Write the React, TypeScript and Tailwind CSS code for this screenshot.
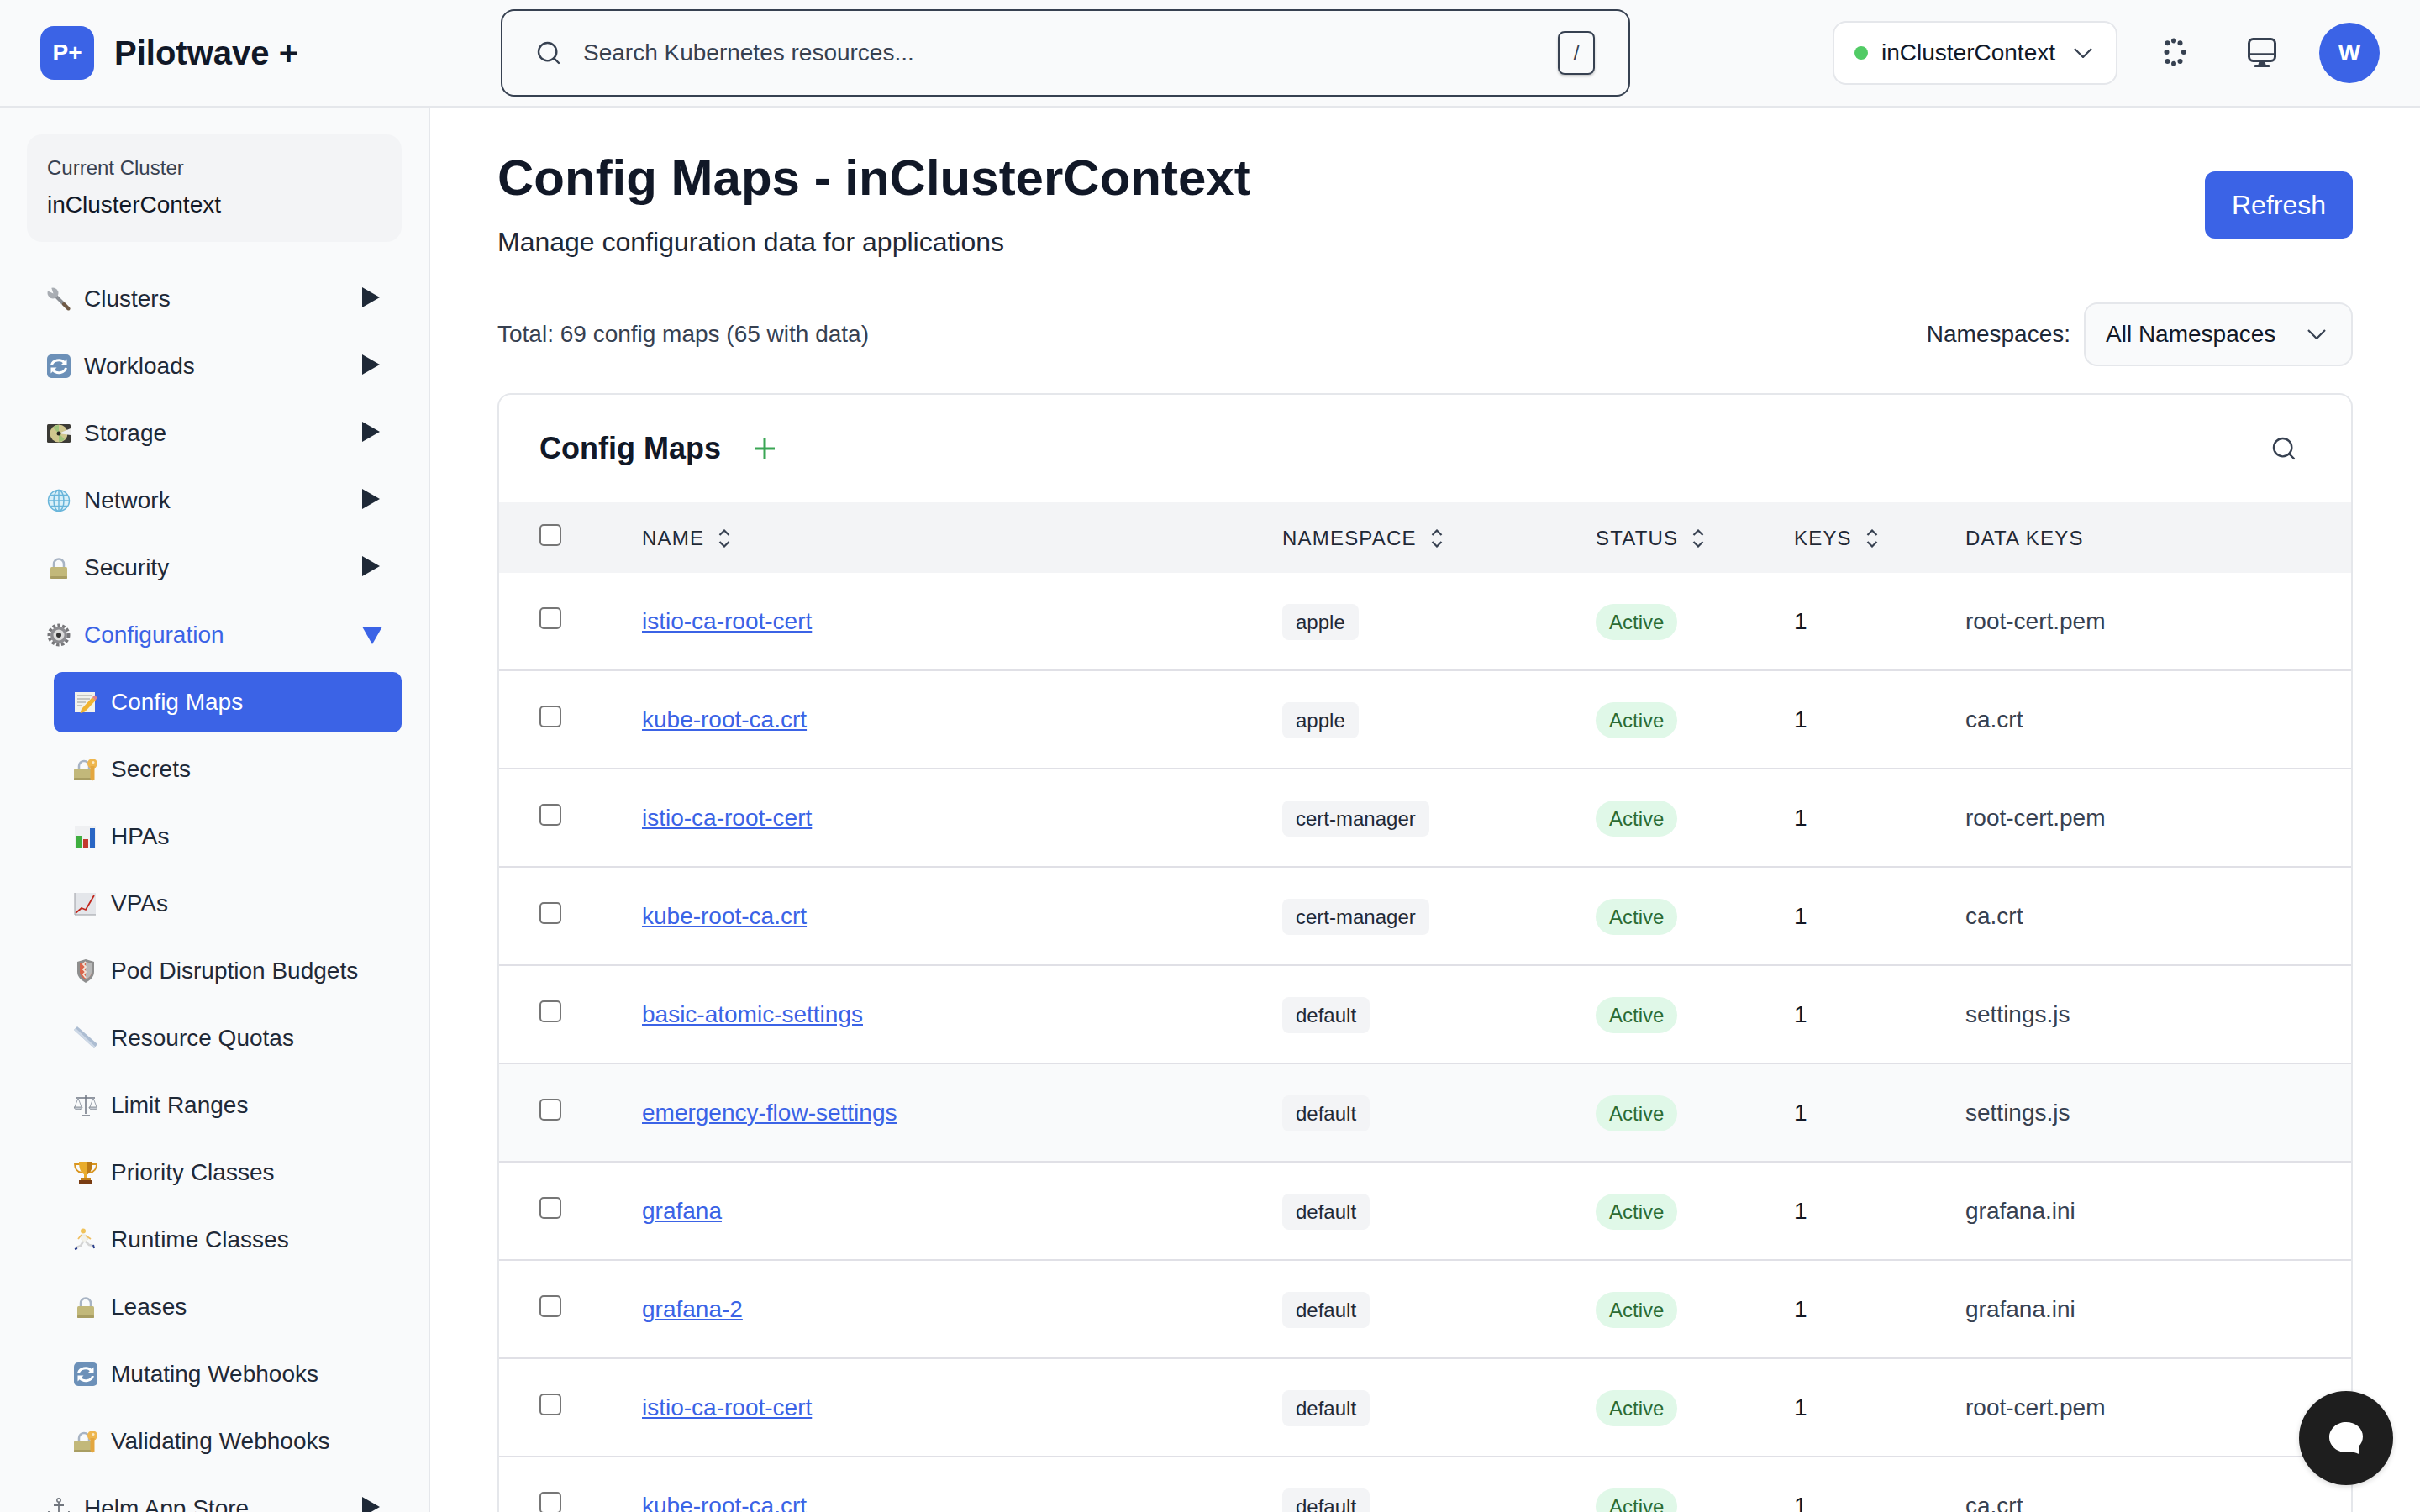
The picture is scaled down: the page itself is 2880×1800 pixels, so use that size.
import type { ReactNode } from 'react';
import { Search } from 'lucide-react';

const BLUE = '#3b63e6';

function Svg({ children, className = 'h-[28px] w-[28px] shrink-0' }: { children: ReactNode; className?: string }) {
  return (
    <svg viewBox="0 0 28 28" className={className} aria-hidden="true">
      {children}
    </svg>
  );
}

const WrenchIcon = () => (
  <Svg>
    <path d="M9 9 25 25" stroke="#8b8f95" strokeWidth="4" strokeLinecap="round" />
    <path d="M20 20 25.500 25.500" stroke="#6f5a46" strokeWidth="4" strokeLinecap="round" />
    <circle cx="7" cy="7" r="6.500" fill="#a9adb3" />
    <path d="M7.500 7.500 0 4V0h5z" fill="#f9fafb" />
  </Svg>
);

const RefreshIcon = () => (
  <Svg>
    <rect x="0" y="0" width="28" height="28" rx="5" fill="#6c90b8" />
    <path d="M5.500 12.500a8.500 7 0 0 1 15-3" fill="none" stroke="#fff" strokeWidth="3" />
    <path d="M23.500 5.500v7h-7z" fill="#fff" />
    <path d="M22.500 16a8.500 7 0 0 1-15 3" fill="none" stroke="#fff" strokeWidth="3" />
    <path d="M4.500 22.500v-7h7z" fill="#fff" />
  </Svg>
);

const DiskIcon = () => (
  <Svg>
    <rect x="0" y="3" width="28" height="22" rx="1.500" fill="#3b3a35" />
    <circle cx="14" cy="14" r="10.500" fill="#cfc68e" />
    <path d="M14 14 7 7a10 10 0 0 1 7-3zM14 14l7 7a10 10 0 0 1-7 3z" fill="#9fc27a" />
    <path d="M14 14 28 8v8z" fill="#ececec" />
    <circle cx="14" cy="14" r="2.500" fill="#26251f" />
  </Svg>
);

const GlobeIcon = () => (
  <Svg>
    <circle cx="14" cy="14" r="12.500" fill="#d9f0f9" stroke="#69b5da" strokeWidth="1.500" />
    <ellipse cx="14" cy="14" rx="6" ry="12.500" fill="none" stroke="#69b5da" strokeWidth="1.500" />
    <path d="M14 1.500v25M1.500 14h25M3.500 7.500h21M3.500 20.500h21" stroke="#69b5da" strokeWidth="1.500" />
  </Svg>
);

const LockIcon = () => (
  <Svg>
    <path d="M8 14V9.500a6 6 0 0 1 12 0V14" fill="none" stroke="#a8b4c4" strokeWidth="2.500" />
    <rect x="4" y="13" width="20" height="14" rx="1.500" fill="#c2b87a" />
    <rect x="4" y="24" width="20" height="3" rx="1" fill="#a89d62" />
  </Svg>
);

const GearIcon = () => (
  <Svg>
    <circle cx="14" cy="14" r="11.500" fill="none" stroke="#77777a" strokeWidth="4" strokeDasharray="3.500 2.300" />
    <circle cx="14" cy="14" r="10" fill="#8c8c90" />
    <circle cx="14" cy="14" r="6.500" fill="#dcdcdc" />
    <circle cx="14" cy="14" r="3" fill="#333" />
  </Svg>
);

const MemoIcon = () => (
  <Svg>
    <rect x="1" y="2" width="24" height="24" fill="#f1f1ec" />
    <path d="M4 6h17M4 10h15M4 14h10M4 18h6" stroke="#9b9b95" strokeWidth="1" />
    <path d="M9 22 22 8l4 3.500-13 14-5.500 1.500z" fill="#f0b433" />
    <path d="M22 8l1.500-1.500a2 2 0 0 1 3 .5l.5 1a2 2 0 0 1-.5 2.500L25.500 12z" fill="#e0848a" />
  </Svg>
);

const LockKeyIcon = () => (
  <Svg>
    <path d="M6 14V10a6 6 0 0 1 12 0v4" fill="none" stroke="#a8b4c4" strokeWidth="2.500" />
    <rect x="0" y="13" width="21" height="14" rx="1.500" fill="#c2b87a" />
    <rect x="0" y="24" width="21" height="3" rx="1" fill="#a89d62" />
    <circle cx="22" cy="7" r="6" fill="#eeb64e" />
    <circle cx="23" cy="5.500" r="1.500" fill="#fbeac5" />
    <path d="M19.500 10h5v16l-2.500 1.500-2.500-2.500z" fill="#e3a63f" />
  </Svg>
);

const BarsIcon = () => (
  <Svg>
    <rect x="1" y="1" width="25" height="26" fill="#eff0f2" />
    <rect x="3" y="13" width="6" height="14" fill="#3fae3f" />
    <rect x="11" y="17" width="6" height="10" fill="#c23a2e" />
    <rect x="19" y="4" width="6" height="23" fill="#2a66c4" />
  </Svg>
);

const ChartIcon = () => (
  <Svg>
    <rect x="1" y="1" width="25" height="26" fill="#e4e6ea" />
    <path d="M2 25 9 19l5 2 10-17" fill="none" stroke="#c2281e" strokeWidth="1.800" />
    <path d="M1 1v26h25" fill="none" stroke="#9a9ca2" strokeWidth="1" />
  </Svg>
);

const ShieldIcon = () => (
  <Svg>
    <path d="M14 0 24 3v12c0 6-5 10-10 13C9 25 4 21 4 15V3z" fill="#8e8e8e" />
    <path d="M14 3 21 5v10c0 4-3 7-7 9-4-2-7-5-7-9V5z" fill="#d9654c" />
    <path d="M14 3v21c4-2 7-5 7-9V5z" fill="#b9b9b9" />
    <path d="M14 3l-3 3 3 3-3 3 3 3-3 3 3 4" fill="none" stroke="#f3e4d8" strokeWidth="1.800" />
  </Svg>
);

const RulerIcon = () => (
  <Svg>
    <path d="M0 4 4 0 28 21 24 26z" fill="#adbdd2" />
    <path d="M0 4 24 26l1.500-2L2 2z" fill="#cdd8e6" />
  </Svg>
);

const ScaleIcon = () => (
  <Svg>
    <path d="M14 2v22M9 26h10M3 5h22" stroke="#6f7682" strokeWidth="1.500" fill="none" />
    <path d="M5 5 1 16M5 5l4 11M23 5l-4 11M23 5l4 11" stroke="#9aa1ac" strokeWidth="1" fill="none" />
    <path d="M0 16h10a5 3 0 0 1-10 0zM18 16h10a5 3 0 0 1-10 0z" fill="#c5cad2" stroke="#767d88" strokeWidth=".8" />
  </Svg>
);

const TrophyIcon = () => (
  <Svg>
    <path d="M7 4H1c0 6 3 9 8 10M21 4h6c0 6-3 9-8 10" fill="none" stroke="#d9951f" strokeWidth="1.800" />
    <path d="M6 1h16c0 8-2 13-6 15v4h-4v-4C8 14 6 9 6 1z" fill="#e9ac2c" />
    <path d="M16 1h6c0 8-2 13-6 15z" fill="#bc7a16" />
    <rect x="8" y="20" width="12" height="3" fill="#c4821c" />
    <rect x="6" y="23" width="16" height="4" fill="#7a3c12" />
  </Svg>
);

const RunnerIcon = () => (
  <Svg>
    <circle cx="11" cy="3.500" r="3" fill="#f0c25a" />
    <path d="M9 8 14 8 17 13 13 17 9 14z" fill="#f2f1ea" stroke="#d8d6c8" strokeWidth=".5" />
    <path d="M14 9 20 13M9 8 5 13" stroke="#efbf62" strokeWidth="1.800" fill="none" />
    <path d="M11 16 8 21 3 23M14 16 18 20 24 21" stroke="#d4d4d4" strokeWidth="2.500" fill="none" />
    <path d="M1 25 4 24M23 20 24 24" stroke="#2b3f8c" strokeWidth="2" fill="none" />
  </Svg>
);

const AnchorIcon = () => (
  <Svg>
    <circle cx="14" cy="4" r="2.200" fill="none" stroke="#70757d" strokeWidth="1.500" />
    <path d="M14 6v20M8 10h12M2 17c0 6 6 9 12 9s12-3 12-9" fill="none" stroke="#70757d" strokeWidth="1.800" />
  </Svg>
);

function Triangle({ open }: { open?: boolean }) {
  if (open) {
    return (
      <svg viewBox="0 0 24 21" className="-mr-[1px] h-[21px] w-[24px] shrink-0" aria-hidden="true">
        <path d="M0 0h24L12 21z" fill={BLUE} />
      </svg>
    );
  }
  return (
    <svg viewBox="0 0 21 24" className="mr-[2px] h-[24px] w-[21px] shrink-0 -translate-y-[2px]" aria-hidden="true">
      <path d="M0 0 21 12 0 24z" fill="#1f2937" />
    </svg>
  );
}

function Chevron({ className }: { className: string }) {
  return (
    <svg viewBox="0 0 22 12" className={className} fill="none" stroke="#374151" strokeWidth="2.200" aria-hidden="true">
      <path d="M1 1l10 10L21 1" />
    </svg>
  );
}

function SortIcon() {
  return (
    <svg viewBox="0 0 16 22" className="h-[22px] w-[16px] shrink-0" fill="none" stroke="#374151" strokeWidth="2.200" aria-hidden="true">
      <path d="M2.500 7 8 1.500 13.500 7M2.500 15 8 20.500 13.500 15" />
    </svg>
  );
}

const NAV_TOP = [
  { label: 'Clusters', icon: <WrenchIcon /> },
  { label: 'Workloads', icon: <RefreshIcon /> },
  { label: 'Storage', icon: <DiskIcon /> },
  { label: 'Network', icon: <GlobeIcon /> },
  { label: 'Security', icon: <LockIcon /> },
];

const NAV_CONFIG = [
  { label: 'Config Maps', icon: <MemoIcon /> },
  { label: 'Secrets', icon: <LockKeyIcon /> },
  { label: 'HPAs', icon: <BarsIcon /> },
  { label: 'VPAs', icon: <ChartIcon /> },
  { label: 'Pod Disruption Budgets', icon: <ShieldIcon /> },
  { label: 'Resource Quotas', icon: <RulerIcon /> },
  { label: 'Limit Ranges', icon: <ScaleIcon /> },
  { label: 'Priority Classes', icon: <TrophyIcon /> },
  { label: 'Runtime Classes', icon: <RunnerIcon /> },
  { label: 'Leases', icon: <LockIcon /> },
  { label: 'Mutating Webhooks', icon: <RefreshIcon /> },
  { label: 'Validating Webhooks', icon: <LockKeyIcon /> },
];

const ROWS = [
  { name: 'istio-ca-root-cert', ns: 'apple', data: 'root-cert.pem' },
  { name: 'kube-root-ca.crt', ns: 'apple', data: 'ca.crt' },
  { name: 'istio-ca-root-cert', ns: 'cert-manager', data: 'root-cert.pem' },
  { name: 'kube-root-ca.crt', ns: 'cert-manager', data: 'ca.crt' },
  { name: 'basic-atomic-settings', ns: 'default', data: 'settings.js' },
  { name: 'emergency-flow-settings', ns: 'default', data: 'settings.js', hovered: true },
  { name: 'grafana', ns: 'default', data: 'grafana.ini' },
  { name: 'grafana-2', ns: 'default', data: 'grafana.ini' },
  { name: 'istio-ca-root-cert', ns: 'default', data: 'root-cert.pem' },
  { name: 'kube-root-ca.crt', ns: 'default', data: 'ca.crt' },
];

// spinner dots, read off the reference: it is taller than it is wide
const SPINNER_DOTS = [
  [0, -13.5],
  [7.5, -10.7],
  [11.8, 0],
  [7.5, 11],
  [0, 13.7],
  [-7.5, 11],
  [-8.5, 0],
  [-7.5, -10.7],
];

const GRID = 'grid grid-cols-[122px_762px_373px_236px_204px_1fr] items-center pl-[48px]';

function Checkbox() {
  return <input type="checkbox" className="-mt-[7px] h-[26px] w-[26px] appearance-none rounded-[5px] border-2 border-[#767676] bg-white" />;
}

function NavRow({ label, icon, active, open, arrow, sub }: { label: string; icon: ReactNode; active?: boolean; open?: boolean; arrow?: boolean; sub?: boolean }) {
  return (
    <div className={`flex h-[72px] shrink-0 items-center gap-4 rounded-[10px] pl-6 pr-6 text-[28px] ${sub ? 'ml-8' : ''} ${active ? 'bg-[#3b63e6] text-white' : open ? 'text-[#3b63e6]' : 'text-[#1f2937]'}`}>
      {icon}
      <span className="flex-1 whitespace-nowrap">{label}</span>
      {arrow && <Triangle open={open} />}
    </div>
  );
}

function Sidebar() {
  return (
    <aside className="flex w-[512px] shrink-0 flex-col gap-2 overflow-hidden border-r-2 border-[#e5e7eb] bg-[#f9fafb] px-8 pt-8">
      <div className="mb-6 flex h-[128px] shrink-0 flex-col justify-center rounded-[18px] bg-[#f3f4f6] px-6 pb-[4px]">
        <div className="text-[24px] leading-[36px] text-[#374151]">Current Cluster</div>
        <div className="mt-[8px] text-[28px] leading-[36px] text-[#111827]">inClusterContext</div>
      </div>
      {NAV_TOP.map((item) => (
        <NavRow key={item.label} label={item.label} icon={item.icon} arrow />
      ))}
      <NavRow label="Configuration" icon={<GearIcon />} arrow open />
      {NAV_CONFIG.map((item) => (
        <NavRow key={item.label} label={item.label} icon={item.icon} sub active={item.label === 'Config Maps'} />
      ))}
      <NavRow label="Helm App Store" icon={<AnchorIcon />} arrow />
    </aside>
  );
}

function Header() {
  return (
    <header className="flex h-[128px] shrink-0 items-center border-b-2 border-[#e5e7eb] bg-[#f9fafb] px-12">
      <div className="flex w-[548px] shrink-0 items-center gap-6">
        <div className="flex h-[64px] w-[64px] items-center justify-center rounded-[16px] bg-[#3b63e6] text-[28px] font-bold text-white">P+</div>
        <span className="text-[40px] font-bold text-[#111827]">Pilotwave +</span>
      </div>
      <div className="flex h-[104px] w-[1344px] shrink-0 items-center rounded-[16px] border-2 border-[#374151] pl-[39px] pr-[40px]">
        <Search size={32} strokeWidth={1.8} className="text-[#374151]" />
        <span className="ml-[25px] flex-1 text-[28px] text-[#374151]">Search Kubernetes resources...</span>
        <kbd className="flex h-[52px] w-[44px] items-center justify-center rounded-[8px] border-2 border-[#374151] font-['Liberation_Sans',sans-serif] text-[24px] text-[#374151] shadow-[0_2px_3px_rgba(0,0,0,0.2)]">/</kbd>
      </div>
      <div className="ml-auto flex items-center gap-8">
        <div className="flex h-[76px] w-[339px] items-center gap-4 rounded-[16px] border-2 border-[#e5e7eb] bg-white pl-6">
          <span className="h-[16px] w-[16px] rounded-full bg-[#51cb65]" />
          <span className="text-[28px] text-[#111827]">inClusterContext</span>
          <Chevron className="ml-[6px] h-[12px] w-[22px]" />
        </div>
        <div className="flex h-[72px] w-[72px] items-center justify-center">
          <svg viewBox="0 0 34 36" className="h-[36px] w-[34px] -translate-y-[1px]" aria-hidden="true">
            {SPINNER_DOTS.map(([x, y]) => (
              <circle key={`${x}-${y}`} cx={16 + x} cy={18 + y} r="3" fill="#374151" />
            ))}
          </svg>
        </div>
        <div className="flex h-[72px] w-[72px] items-center justify-center">
          <svg viewBox="0 0 34 36" className="h-[36px] w-[34px]" fill="none" aria-hidden="true">
            <rect x="1.500" y="1.500" width="31" height="26" rx="5" stroke="#374151" strokeWidth="3" />
            <path d="M2 19.500h30" stroke="#374151" strokeWidth="2.500" />
            <path d="M13.500 28h7l1 4h3.500a1.500 1.500 0 0 1 0 3H9a1.500 1.500 0 0 1 0-3h3.500z" fill="#374151" />
          </svg>
        </div>
        <div className="flex h-[72px] w-[72px] items-center justify-center rounded-full bg-[#3b63e6] text-[28px] font-bold text-white">W</div>
      </div>
    </header>
  );
}

function Table() {
  const headers = [
    { label: 'Name', sort: true },
    { label: 'Namespace', sort: true },
    { label: 'Status', sort: true },
    { label: 'Keys', sort: true },
    { label: 'Data Keys', sort: false },
  ];
  return (
    <div>
      <div className={`${GRID} h-[84px] bg-[#f3f4f6]`}>
        <Checkbox />
        {headers.map((h) => (
          <div key={h.label} className="flex items-center gap-4 pt-[2px] text-[24px] uppercase tracking-[1.2px] text-[#1f2937]">
            {h.label}
            {h.sort && <SortIcon />}
          </div>
        ))}
      </div>
      {ROWS.map((row, i) => (
        <div key={i} className={`${GRID} h-[117px] border-b-2 border-[#e0e0e6] ${row.hovered ? 'bg-[#f9fafb]' : 'bg-white'}`}>
          <Checkbox />
          <a className="w-fit text-[28px] text-[#3b63e6] underline">{row.name}</a>
          <span className="mt-[2px] flex h-[43px] w-fit items-center rounded-[8px] bg-[#f3f4f6] px-4 text-[24px] text-[#1f2937]">{row.ns}</span>
          <span className="mt-[2px] flex h-[43px] w-fit items-center rounded-full bg-[#e0f8e8] px-4 text-[24px] text-[#2b6b33]">Active</span>
          <span className="text-[28px] text-[#111827]">1</span>
          <span className="text-[28px] text-[#374151]">{row.data}</span>
        </div>
      ))}
    </div>
  );
}

export default function App() {
  return (
    <div className="flex h-[1800px] flex-col overflow-hidden bg-white font-['Liberation_Sans',Arial,sans-serif]">
      <Header />
      <div className="flex min-h-0 flex-1">
        <Sidebar />
        <main className="min-w-0 flex-1 overflow-hidden px-20 pt-12">
          <div className="flex items-center justify-between">
            <div>
              <h1 className="text-[60px] font-bold leading-[72px] text-[#111827]">Config Maps - inClusterContext</h1>
              <p className="mt-4 text-[32px] leading-[48px] text-[#1f2937]">Manage configuration data for applications</p>
            </div>
            <button className="h-[80px] w-[176px] rounded-[12px] bg-[#3b63e6] text-[32px] font-medium text-white">Refresh</button>
          </div>
          <div className="mt-12 flex h-[76px] items-center justify-between">
            <span className="text-[28px] text-[#374151]">Total: 69 config maps (65 with data)</span>
            <div className="flex items-center gap-4">
              <span className="text-[28px] text-[#1f2937]">Namespaces:</span>
              <div className="flex h-[76px] w-[320px] items-center rounded-[16px] border-2 border-[#e5e7eb] bg-[#f9fafb] pl-6">
                <span className="text-[28px] text-[#111827]">All Namespaces</span>
                <Chevron className="ml-[38px] h-[12px] w-[22px]" />
              </div>
            </div>
          </div>
          <section className="mt-8 overflow-hidden rounded-[16px] border-2 border-[#e5e7eb] bg-white">
            <div className="flex h-[128px] items-center pl-[48px] pr-[64px]">
              <h2 className="text-[36px] font-bold text-[#111827]">Config Maps</h2>
              <svg viewBox="0 0 24 24" className="ml-[40px] h-[24px] w-[24px]" aria-hidden="true">
                <path d="M12 0v24M0 12h24" stroke="#3aa655" strokeWidth="3" />
              </svg>
              <Search size={32} strokeWidth={1.8} className="ml-auto text-[#374151]" />
            </div>
            <Table />
          </section>
        </main>
      </div>
      <button className="fixed bottom-[32px] right-[32px] flex h-[112px] w-[112px] items-center justify-center rounded-full bg-[#1e1e1e] shadow-[0_2px_6px_rgba(0,0,0,0.15)]">
        <svg viewBox="0 0 40 38" className="h-[38px] w-[40px]" aria-hidden="true">
          <path d="M20 0c11 0 20 7 20 17 0 5-2 9-5 12l1 7c0 2-2 2-3 1l-7-2c-2 .5-4 1-6 1C9 36 0 28 0 18 0 8 9 0 20 0z" fill="#fff" />
        </svg>
      </button>
    </div>
  );
}
